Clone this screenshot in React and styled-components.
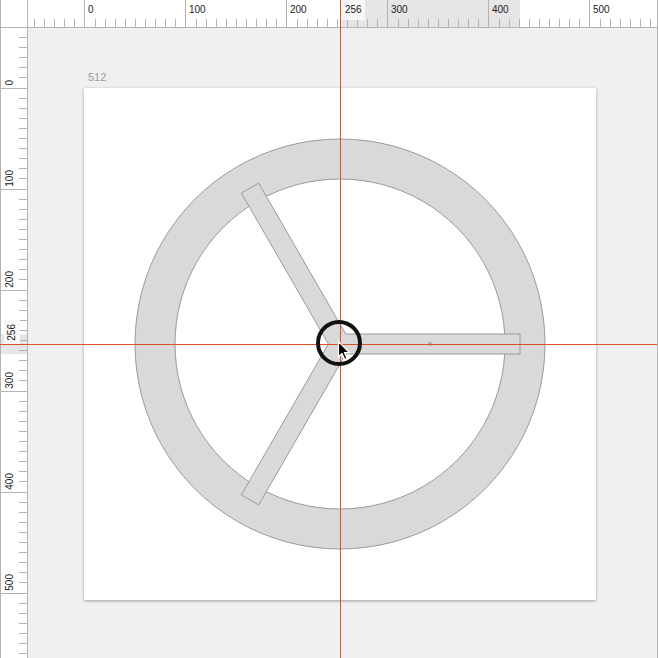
import React from "react";
import styled, { createGlobalStyle } from "styled-components";

const GlobalStyle = createGlobalStyle`
  html, body { margin: 0; padding: 0; background: #f0f0f0; }
  body { font-family: "Liberation Sans", Arial, sans-serif; }
`;

const RULER = 28;
const GUIDE = "#dc5028";
const LINE = "#b3b3b3";

const Window = styled.div`
  position: relative;
  width: 658px;
  height: 658px;
  overflow: hidden;
  display: grid;
  grid-template-columns: ${RULER}px 1fr;
  grid-template-rows: ${RULER}px 1fr;
  background: #f0f0f0;
  border-right: 1px solid ${LINE};
  box-sizing: border-box;
`;

const Corner = styled.div`
  background: #fff;
  border-right: 1px solid ${LINE};
  border-bottom: 1px solid ${LINE};
  border-left: 1px solid ${LINE};
  box-sizing: border-box;
`;

const TopRuler = styled.div`
  position: relative;
  display: flex;
  background: #fff;
  border-bottom: 1px solid ${LINE};
  box-sizing: border-box;
  overflow: hidden;
`;

const HSegment = styled.div`
  flex: 0 0 ${(p) => p.$w}px;
  display: flex;
  flex-direction: column;
  justify-content: space-between;
  border-left: ${(p) => (p.$major ? `1px solid ${LINE}` : "none")};
  box-sizing: border-box;
  position: relative;
  z-index: 1;
`;

const HLabel = styled.span`
  font-size: 10px;
  line-height: 12px;
  color: #222;
  padding: 4px 0 0 3px;
  height: 16px;
`;

const HTicks = styled.div`
  display: flex;
  justify-content: flex-end;
  height: 8px;
`;

const HTick = styled.div`
  flex: 0 0 10px;
  box-sizing: border-box;
  border-left: ${(p) => (p.$off ? "none" : `1px solid ${LINE}`)};
`;

const LeftRuler = styled.div`
  position: relative;
  display: flex;
  flex-direction: column;
  background: #fff;
  border-right: 1px solid ${LINE};
  border-left: 1px solid ${LINE};
  box-sizing: border-box;
  overflow: hidden;
`;

const VSegment = styled.div`
  flex: 0 0 ${(p) => p.$h}px;
  display: flex;
  border-bottom: 1px solid ${LINE};
  box-sizing: border-box;
  position: relative;
  z-index: 1;
`;

const VLabelCol = styled.div`
  flex: 1;
  display: flex;
  flex-direction: column;
  justify-content: flex-end;
  align-items: center;
  padding-bottom: 2px;
`;

const VLabel = styled.span`
  writing-mode: vertical-rl;
  transform: rotate(180deg);
  font-size: 10px;
  line-height: 12px;
  color: #222;
`;

const VTicks = styled.div`
  flex: 0 0 8px;
  display: flex;
  flex-direction: column;
`;

const VTick = styled.div`
  flex: 0 0 10px;
  box-sizing: border-box;
  border-bottom: ${(p) => (p.$off ? "none" : `1px solid ${LINE}`)};
`;

const HSelection = styled.div`
  position: absolute;
  top: 0;
  bottom: 0;
  left: ${340 - RULER}px;
  width: 180px;
  background: #e6e6e6;
`;

const HMarker = styled.span`
  position: absolute;
  z-index: 2;
  top: 0;
  left: ${340 - RULER}px;
  width: 25px;
  height: 20px;
  background: #f7f7f7;
  font-size: 10px;
  line-height: 12px;
  padding: 4px 0 0 5px;
  box-sizing: border-box;
  color: #222;
`;

const VSelection = styled.div`
  position: absolute;
  left: 0;
  right: 0;
  top: ${334 - RULER}px;
  height: 20px;
  background: #e6e6e6;
`;

const VMarker = styled.span`
  position: absolute;
  z-index: 2;
  left: 3px;
  top: ${320 - RULER}px;
  width: 16px;
  height: 24px;
  background: #f7f7f7;
  display: flex;
  align-items: flex-end;
  justify-content: center;
  padding-bottom: 3px;
  box-sizing: border-box;
`;

const Canvas = styled.div`
  padding: 42px 0 0 56px;
  background: #f0f0f0;
`;

const BoardLabel = styled.div`
  font-size: 11px;
  line-height: 14px;
  color: #999;
  padding-left: 4px;
  margin-bottom: 4px;
`;

const Artboard = styled.div`
  width: 512px;
  height: 512px;
  background: #fff;
  box-shadow: 0 1px 3px rgba(0, 0, 0, 0.35);
`;

const Guide = styled.div`
  position: absolute;
  z-index: 5;
  background: ${GUIDE};
  ${(p) =>
    p.$vertical
      ? `left: ${p.$at}px; top: 0; bottom: 0; width: 1px;`
      : `top: ${p.$at}px; left: 0; right: 0; height: 1px;`}
`;

const Lens = styled.div`
  position: absolute;
  z-index: 6;
  left: 316px;
  top: 320px;
  width: 46px;
  height: 46px;
  border: 4px solid #111;
  border-radius: 50%;
  box-sizing: border-box;
`;

const Pointer = styled.svg`
  position: absolute;
  z-index: 7;
  left: 337px;
  top: 340px;
`;

const hSegments = [
  { w: 56, ticks: 5, label: null, major: false },
  ...[0, 100, 200, 300, 400, 500, null].map((v) => ({ w: 100, ticks: 10, label: v, major: true })),
];

const vSegments = [
  { h: 60, label: 0 },
  ...[100, 200, 300, 400, 500, null].map((v) => ({ h: 100, label: v })),
];

function Wheel() {
  // union of three 20px spokes from the centre (256,256)
  const d =
    "M436 246 L261.77 246 L174.66 95.1 L157.34 105.1 L244.45 256 L157.34 406.9 L174.66 416.9 L261.77 266 L436 266 Z";
  return (
    <svg width="512" height="512" viewBox="0 0 512 512">
      <path
        d="M256 51 A205 205 0 1 0 256.01 51 Z M256 91 A165 165 0 1 1 255.99 91 Z"
        fill="#d9d9d9"
        stroke="#9a9a9a"
        strokeWidth="1"
        fillRule="evenodd"
      />
      <path d={d} fill="#d9d9d9" stroke="#9a9a9a" strokeWidth="1" />
      <circle cx="346" cy="256" r="2" fill="#a8a8a8" />
      <circle cx="256" cy="256" r="2" fill="#a8a8a8" />
    </svg>
  );
}

export default function App() {
  return (
    <>
      <GlobalStyle />
      <Window>
        <Corner />
        <TopRuler>
          <HSelection />
          <HMarker>256</HMarker>
          {hSegments.map((s, i) => (
            <HSegment key={i} $w={s.w} $major={s.major}>
              <HLabel>{s.label}</HLabel>
              <HTicks>
                {Array.from({ length: s.ticks }).map((_, k) => (
                  <HTick key={k} $off={s.major && k === 0} />
                ))}
              </HTicks>
            </HSegment>
          ))}
        </TopRuler>
        <LeftRuler>
          <VSelection />
          <VMarker>
            <VLabel>256</VLabel>
          </VMarker>
          {vSegments.map((s, i) => (
            <VSegment key={i} $h={s.h}>
              <VLabelCol>
                <VLabel>{s.label}</VLabel>
              </VLabelCol>
              <VTicks>
                {Array.from({ length: s.h / 10 }).map((_, k) => (
                  <VTick key={k} $off={k === s.h / 10 - 1} />
                ))}
              </VTicks>
            </VSegment>
          ))}
        </LeftRuler>
        <Canvas>
          <BoardLabel>512</BoardLabel>
          <Artboard>
            <Wheel />
          </Artboard>
        </Canvas>
        <Guide $vertical $at={340} />
        <Guide $at={344} />
        <Lens />
        <Pointer width="14" height="22" viewBox="0 0 14 22">
          <path
            d="M1.5 1.5 L1.5 17 L5 13.5 L7.7 19.6 L10 18.6 L7.4 12.6 L12.3 12.6 Z"
            fill="#000"
            stroke="#fff"
            strokeWidth="1.2"
            strokeLinejoin="round"
          />
        </Pointer>
      </Window>
    </>
  );
}
